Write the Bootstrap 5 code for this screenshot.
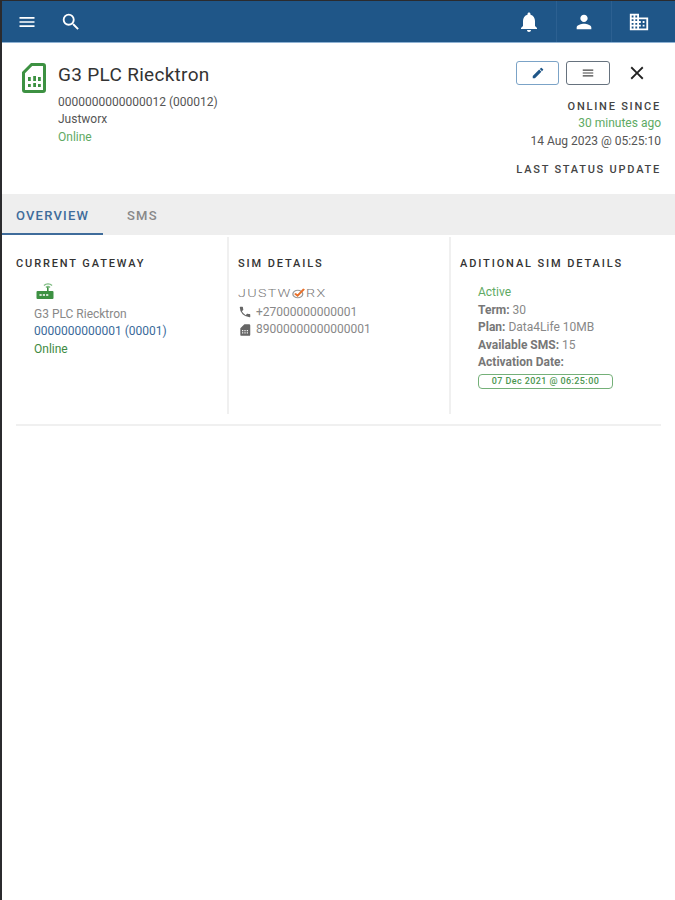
<!DOCTYPE html>
<html lang="en">

<head>
    <meta charset="UTF-8">
    <meta name="viewport" content="width=device-width, initial-scale=1.0">
    <title>G3 PLC Riecktron</title>
    <link href="https://cdn.jsdelivr.net/npm/bootstrap@5.3.3/dist/css/bootstrap.min.css" rel="stylesheet">
    <script src="https://cdn.jsdelivr.net/npm/bootstrap@5.3.3/dist/js/bootstrap.bundle.min.js"></script>
    <style>
        html, body { height: 100%; }
        body {
            font-family: Roboto, "Liberation Sans", sans-serif;
            font-size: 12px;
            line-height: 17.5px;
            color: #555;
            background: #fff;
            border-left: 2px solid #2b2b2e;
            border-top: 1px solid #2b2b2e;
        }
        .top-bar { height: 42px; background: #1f5688; border-bottom: 1px solid #8fb2d3; }
        .top-bar svg { fill: #fff; display: block; }
        .bar-left { padding-left: 15px; gap: 23px; }
        .bar-cell { height: 41px; width: 55px; border-left: 1px solid #2c6091; }
        .bar-cell.plain { border-left: 0; }
        .bar-cell.last { width: 64px; padding-right: 9px; }
        .head-area { height: 151px; padding: 18px 14px 0 19px; }
        .sim-icon { width: 26px; margin-top: 1px; margin-right: 11px; }
        .dev-title { font-size: 19px; line-height: 28px; font-weight: 400; color: #333; margin: 0 0 4.5px; letter-spacing: .3px; }
        .dark-text { color: #555; }
        .ok-text { color: #60aa64; }
        .tool-row { gap: 7px; margin-bottom: 15px; }
        .tool-btn {
            width: 44px; height: 24px; padding: 0; background: #fff; border-radius: 3px;
            display: flex; align-items: center; justify-content: center;
        }
        .tool-btn.edit { width: 43px; border: 1px solid #7ba3c7; }
        .tool-btn.menu { border: 1px solid #66727e; }
        .close-x { width: 44px; padding-left: 9px; }
        .caps-label { font-size: 11px; font-weight: 500; letter-spacing: 1.77px; color: #444; line-height: 14px; margin-bottom: 1px; }
        .caps-label.spaced { margin-top: 13px; }
        .tab-strip { background: #eee; height: 41px; }
        .tab-item {
            height: 41px; padding: 13px 14px 0; font-size: 13px; line-height: 18px; font-weight: 500;
            letter-spacing: 1.2px; color: #888; text-decoration: none;
        }
        .tab-item.active { color: #3f6c9b; border-bottom: 2px solid #3f6c9b; width: 101px; }
        .tab-item.second { padding-left: 24px; }
        .detail-row { height: 177px; margin: 2px 0 0; padding-left: 14px; }
        .detail-col { padding-top: 20px; }
        .detail-col.one { width: 211px; }
        .detail-col.two { width: 222px; border-left: 2px solid #f0f0f0; padding-left: 9px; }
        .detail-col.three { flex: 1; border-left: 2px solid #f0f0f0; padding-left: 9px; }
        .col-heading { font-size: 11px; font-weight: 500; letter-spacing: 1.88px; color: #333; line-height: 14px; margin-bottom: 14px; }
        .gw-block { padding-left: 18px; margin-top: -3px; }
        .gw-block svg { display: block; margin: 0 0 5.5px 2px; }
        .grey-text { color: #888; }
        .link-blue { color: #3a6a9a; }
        .ok-dark { color: #3d8a41; }
        .logo-line {
            font-weight: 300; font-size: 11px; letter-spacing: 1px; line-height: 17.5px; margin: 4px 0 1px;
            color: #777; display: flex; align-items: center; transform: scaleX(1.3); transform-origin: left;
        }
        .icon-line { display: flex; align-items: center; gap: 4px; color: #888; }
        .extra-block { padding-left: 18px; margin-top: -1px; color: #888; }
        .extra-block b { font-weight: 700; color: #777; }
        .date-pill {
            display: block; width: 135px; height: 15px; margin-top: 2.5px; border: 1.5px solid #74b078; border-radius: 4px;
            font-size: 9px; line-height: 12px; font-weight: 500; color: #4b9650; text-align: center; letter-spacing: .4px;
        }
        .rule-line { height: 2px; background: #f0f0f0; margin: 10px 14px 0; }
    </style>
</head>

<body>
    <!-- Top bar -->
    <nav class="top-bar d-flex justify-content-between">
        <div class="bar-left d-flex align-items-center">
            <svg width="20" height="20" viewBox="0 0 24 24"><path d="M3 18h18v-2H3v2zm0-5h18v-2H3v2zm0-7v2h18V6H3z"/></svg>
            <svg width="22" height="22" viewBox="0 0 24 24"><path d="M15.500 14h-.79l-.28-.27A6.470 6.470 0 0 0 16 9.500 6.500 6.500 0 1 0 9.500 16c1.610 0 3.090-.59 4.230-1.570l.27.28v.79l5 4.990L20.490 19l-4.990-5zm-6 0C7.010 14 5 11.990 5 9.500S7.010 5 9.500 5 14 7.010 14 9.500 11.990 14 9.500 14z"/></svg>
        </div>
        <div class="d-flex">
            <div class="bar-cell plain d-flex align-items-center justify-content-center">
                <svg width="24" height="24" viewBox="0 0 24 24"><path d="M12 22c1.100 0 2-.9 2-2h-4c0 1.100.9 2 2 2zm6-6v-5c0-3.070-1.630-5.640-4.500-6.320V4c0-.83-.67-1.500-1.500-1.500s-1.500.67-1.500 1.500v.68C7.640 5.360 6 7.920 6 11v5l-2 2v1h16v-1l-2-2z"/></svg>
            </div>
            <div class="bar-cell d-flex align-items-center justify-content-center">
                <svg width="22" height="22" viewBox="0 0 24 24"><path d="M12 12c2.210 0 4-1.790 4-4s-1.790-4-4-4-4 1.790-4 4 1.790 4 4 4zm0 2c-2.670 0-8 1.340-8 4v2h16v-2c0-2.660-5.330-4-8-4z"/></svg>
            </div>
            <div class="bar-cell last d-flex align-items-center justify-content-center">
                <svg width="22" height="22" viewBox="0 0 24 24"><path d="M12 7V3H2v18h20V7H12zM6 19H4v-2h2v2zm0-4H4v-2h2v2zm0-4H4V9h2v2zm0-4H4V5h2v2zm4 12H8v-2h2v2zm0-4H8v-2h2v2zm0-4H8V9h2v2zm0-4H8V5h2v2zm10 12h-8v-2h2v-2h-2v-2h2v-2h-2V9h8v10zm-2-8h-2v2h2v-2zm0 4h-2v2h2v-2z"/></svg>
            </div>
        </div>
    </nav>

    <!-- Device header -->
    <div class="head-area d-flex justify-content-between">
        <div class="d-flex">
            <svg class="sim-icon" height="32" viewBox="0 0 26 32" fill="#3d9142">
                <path d="M10 1h12a3 3 0 0 1 3 3v24a3 3 0 0 1-3 3H4a3 3 0 0 1-3-3V10zm1.200 3L4 11.200V28h18V4z"/>
                <path d="M7 15h2.800v4H7zM12.200 14h2.800v5h-2.800zM17 15h2.800v4H17zM7 22h2.800v3H7zM12.200 21h2.800v4h-2.800zM17 22h2.800v3H17z"/>
            </svg>
            <div>
                <h1 class="dev-title">G3 PLC Riecktron</h1>
                <div class="dark-text">0000000000000012 (000012)</div>
                <div class="dark-text">Justworx</div>
                <div class="ok-text">Online</div>
            </div>
        </div>
        <div class="text-end">
            <div class="tool-row d-flex justify-content-end align-items-center">
                <button class="tool-btn edit" type="button" aria-label="Edit">
                    <svg width="14" height="14" viewBox="0 0 24 24" fill="#1f5688"><path d="M3 17.250V21h3.750L17.810 9.940l-3.750-3.750L3 17.250zM20.710 7.040a1 1 0 0 0 0-1.410l-2.340-2.340a1 1 0 0 0-1.410 0l-1.830 1.830 3.750 3.750 1.830-1.830z"/></svg>
                </button>
                <button class="tool-btn menu" type="button" aria-label="Menu">
                    <svg width="14" height="14" viewBox="0 0 24 24" fill="#444"><path d="M3 18h18v-2H3v2zm0-5h18v-2H3v2zm0-7v2h18V6H3z"/></svg>
                </button>
                <div class="close-x d-flex">
                    <svg width="22" height="22" viewBox="0 0 24 24" fill="#222"><path d="M19 6.410 17.590 5 12 10.590 6.410 5 5 6.410 10.590 12 5 17.590 6.410 19 12 13.410 17.590 19 19 17.590 13.410 12z"/></svg>
                </div>
            </div>
            <div class="caps-label">ONLINE SINCE</div>
            <div class="ok-text">30 minutes ago</div>
            <div class="dark-text">14 Aug 2023 @ 05:25:10</div>
            <div class="caps-label spaced">LAST STATUS UPDATE</div>
        </div>
    </div>

    <!-- Tabs -->
    <div class="tab-strip d-flex">
        <a class="tab-item active" href="#">OVERVIEW</a>
        <a class="tab-item second" href="#">SMS</a>
    </div>

    <!-- Details -->
    <div class="detail-row d-flex">
        <div class="detail-col one">
            <div class="col-heading">CURRENT GATEWAY</div>
            <div class="gw-block">
                <svg width="18" height="18" viewBox="0 0 18 18" fill="#3d9142">
                    <rect x=".5" y="9" width="17" height="8" rx="1"/>
                    <path d="M11 5h1.600v4H11z"/>
                    <path d="M7.500 3a6.500 6.500 0 0 1 9 0l-.9 1a5.200 5.200 0 0 0-7.200 0zM9.500 5a3.600 3.600 0 0 1 5 0l-.9 1a2.300 2.300 0 0 0-3.200 0z" fill="#7dbb80"/>
                    <path d="M3.500 12.300h2.200v1.500H3.500zM6.800 12.300H9v1.500H6.800zM10.100 12.300h2.200v1.500h-2.200z" fill="#fff"/>
                </svg>
                <div class="grey-text">G3 PLC Riecktron</div>
                <div class="link-blue">0000000000001 (00001)</div>
                <div class="ok-dark">Online</div>
            </div>
        </div>
        <div class="detail-col two">
            <div class="col-heading">SIM DETAILS</div>
            <div class="logo-line">JUSTW<svg width="11" height="11" viewBox="0 0 11 11"><circle cx="5" cy="6" r="3.800" fill="none" stroke="#999" stroke-width="1"/><path d="M2.800 5.500l2 2.200L9.800 1" fill="none" stroke="#e8702a" stroke-width="1.800"/></svg>RX</div>
            <div class="icon-line">
                <svg width="14" height="14" viewBox="0 0 24 24" fill="#666"><path d="M6.620 10.790a15.150 15.150 0 0 0 6.590 6.590l2.200-2.200a1 1 0 0 1 1.020-.24c1.120.37 2.330.57 3.570.57a1 1 0 0 1 1 1V20a1 1 0 0 1-1 1A17 17 0 0 1 3 4a1 1 0 0 1 1-1h3.500a1 1 0 0 1 1 1c0 1.250.2 2.450.57 3.570a1 1 0 0 1-.25 1.020l-2.200 2.200z"/></svg>
                <span>+27000000000001</span>
            </div>
            <div class="icon-line">
                <svg width="14" height="14" viewBox="0 0 24 24" fill="#666"><path d="M19 2h-8L4 9v11a2 2 0 0 0 2 2h13a2 2 0 0 0 2-2V4a2 2 0 0 0-2-2zM9 18H7v-2h2v2zm4 0h-2v-2h2v2zm4 0h-2v-2h2v2zm-8-4H7v-2h2v2zm4 0h-2v-2h2v2zm4 0h-2v-2h2v2z"/></svg>
                <span>89000000000000001</span>
            </div>
        </div>
        <div class="detail-col three">
            <div class="col-heading">ADITIONAL SIM DETAILS</div>
            <div class="extra-block">
                <div class="ok-text">Active</div>
                <div><b>Term:</b> 30</div>
                <div><b>Plan:</b> Data4Life 10MB</div>
                <div><b>Available SMS:</b> 15</div>
                <div><b>Activation Date:</b></div>
                <span class="date-pill">07 Dec 2021 @ 06:25:00</span>
            </div>
        </div>
    </div>
    <div class="rule-line"></div>
</body>

</html>
